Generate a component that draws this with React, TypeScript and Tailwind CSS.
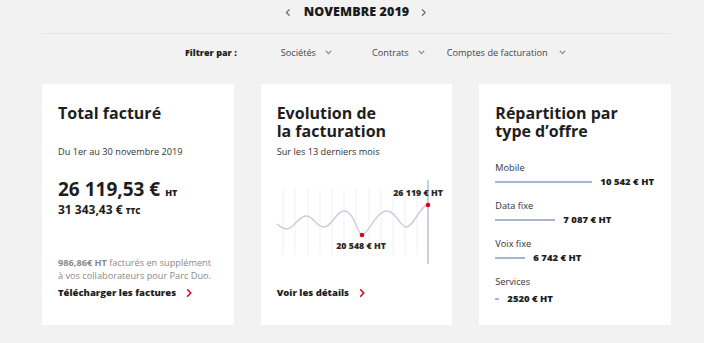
import React from 'react';

function Chevron({ dir, className }: { dir: 'left' | 'right' | 'down'; className?: string }) {
  const d =
    dir === 'left'
      ? 'M6 1 L2 5 L6 9'
      : dir === 'right'
        ? 'M2 1 L6 5 L2 9'
        : 'M1 2 L5 6 L9 2';
  return (
    <svg viewBox="0 0 10 10" className={className} fill="none" aria-hidden="true">
      <path d={d} stroke="currentColor" strokeWidth={2} strokeLinecap="round" strokeLinejoin="round" />
    </svg>
  );
}

function CardLink({ label }: { label: string }) {
  return (
    <a className="mt-auto flex items-center gap-[10px] pb-[26px] text-[9.5px] font-extrabold leading-[13px] text-[#1e1e1e]">
      {label}
      <Chevron dir="right" className="h-[10px] w-[8px] text-[#e2001a]" />
    </a>
  );
}

const gridX = [7, 19, 32, 44, 56, 68, 80, 93, 105, 117, 129, 141];

function Chart() {
  return (
    <svg width="175" height="86" viewBox="0 0 175 86" className="-ml-[1px] mt-[22px] block overflow-visible">
      {gridX.map((x) => (
        <line key={x} x1={x} y1={9} x2={x} y2={75} stroke="#f1f1f1" strokeWidth={1} />
      ))}
      <line x1={152} y1={0} x2={152} y2={84} stroke="#c9d0e2" strokeWidth={2} />
      <path
        d="M1 44 C5 47, 7 49, 11 49 C18 49, 22 36, 30 36 C38 36, 40 47, 48 47 C56 47, 60 31, 68 31 C78 31, 82 55, 86 55 C92 55, 100 31, 111 31 C120 31, 124 47, 130 47 C138 47, 144 25, 152 25"
        fill="none"
        stroke="#c7cee2"
        strokeWidth={1.4}
      />
      <circle cx={86} cy={55} r={2.3} fill="#e2001a" />
      <circle cx={152} cy={25} r={2.3} fill="#e2001a" />
      <text x={142} y={16} textAnchor="middle" fontSize="8.8" fontWeight="800" fill="#2a2a2a" fontFamily="'Open Sans', sans-serif">
        26 119 € HT
      </text>
      <text x={85} y={69} textAnchor="middle" fontSize="8.8" fontWeight="800" fill="#2a2a2a" fontFamily="'Open Sans', sans-serif">
        20 548 € HT
      </text>
    </svg>
  );
}

const offers = [
  { label: 'Mobile', width: 97, value: '10 542 € HT', mt: 'mt-[22px]', gap: 'mt-[2px]' },
  { label: 'Data fixe', width: 60, value: '7 087 € HT', mt: 'mt-[12px]', gap: 'mt-[2px]' },
  { label: 'Voix fixe', width: 30, value: '6 742 € HT', mt: 'mt-[12px]', gap: 'mt-[2px]' },
  { label: 'Services', width: 4, value: '2520 € HT', mt: 'mt-[12px]', gap: 'mt-[5px]' },
];

export default function App() {
  return (
    <div className="min-h-[343px] bg-[#f2f2f2] font-['Open_Sans',sans-serif] text-[#222]">
      <div className="ml-[42px] w-[629px]">
        <div className="flex h-[34px] items-center justify-center gap-[12px] border-b border-[#e6e6e6] pb-[8px]">
          <Chevron dir="left" className="h-[9px] w-[7px] text-[#777]" />
          <span className="text-[12.5px] font-extrabold tracking-[0.1px] text-[#1a1a1a]">NOVEMBRE 2019</span>
          <Chevron dir="right" className="h-[9px] w-[7px] text-[#777]" />
        </div>

        <div className="flex h-[35px] items-center pl-[143px] pt-[3px] text-[9.2px] text-[#444]">
          <span className="text-[9px] font-extrabold text-[#1e1e1e]">Filtrer par :</span>
          <span className="ml-[44px] flex items-center gap-[9px]">
            Sociétés
            <Chevron dir="down" className="h-[6px] w-[7px] text-[#888]" />
          </span>
          <span className="ml-[40px] flex items-center gap-[9px]">
            Contrats
            <Chevron dir="down" className="h-[6px] w-[7px] text-[#888]" />
          </span>
          <span className="ml-[22px] flex items-center gap-[11px]">
            Comptes de facturation
            <Chevron dir="down" className="h-[6px] w-[7px] text-[#888]" />
          </span>
        </div>

        <div className="mt-[15px] grid grid-cols-3 gap-[27px]">
          <div className="flex h-[241px] flex-col bg-white px-[16px] pt-[20px]">
            <h2 className="text-[16px] font-bold leading-[18px] text-[#1e1e1e]">Total facturé</h2>
            <p className="mt-[24px] text-[9.2px] leading-[12px] text-[#333]">Du 1er au 30 novembre 2019</p>
            <p className="mt-[21px] text-[19px] font-bold leading-[20px] text-[#1e1e1e]">
              26 119,53 € <span className="text-[9px] font-extrabold">HT</span>
            </p>
            <p className="text-[12px] font-bold leading-[14px] text-[#1e1e1e]">
              31 343,43 € <span className="text-[8px] font-extrabold">TTC</span>
            </p>
            <p className="mt-[38px] text-[9.2px] leading-[13px] text-[#8a8a8a]">
              <span className="font-bold">986,86€ HT</span> facturés en supplément
              <br />à vos collaborateurs pour Parc Duo.
            </p>
            <CardLink label="Télécharger les factures" />
          </div>

          <div className="flex h-[241px] flex-col bg-white px-[16px] pt-[20px]">
            <h2 className="text-[16px] font-bold leading-[18px] text-[#1e1e1e]">
              Evolution de
              <br />
              la facturation
            </h2>
            <p className="mt-[6px] text-[9.2px] leading-[12px] text-[#333]">Sur les 13 derniers mois</p>
            <Chart />
            <CardLink label="Voir les détails" />
          </div>

          <div className="flex h-[241px] flex-col bg-white px-[16px] pt-[20px]">
            <h2 className="text-[16px] font-bold leading-[18px] text-[#1e1e1e]">
              Répartition par
              <br />
              type d’offre
            </h2>
            {offers.map((o) => (
              <div key={o.label} className={o.mt}>
                <p className="text-[9.2px] leading-[12px] text-[#333]">{o.label}</p>
                <div className={`${o.gap} flex items-center gap-[8px]`}>
                  <div className="h-[2px] bg-[#a9b4d2]" style={{ width: o.width }} />
                  <span className="text-[9.5px] font-extrabold leading-[12px] text-[#1e1e1e]">{o.value}</span>
                </div>
              </div>
            ))}
          </div>
        </div>
      </div>
    </div>
  );
}
